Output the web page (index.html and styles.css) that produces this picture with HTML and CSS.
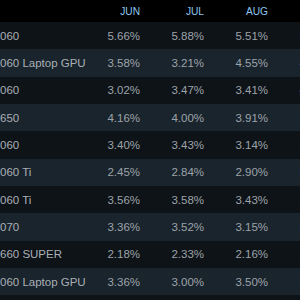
FILE: index.html
```html
<!DOCTYPE html>
<html>
<head>
<meta charset="utf-8">
<link rel="stylesheet" href="styles.css">
</head>
<body>
<div class="table">
  <div class="row head">
    <div class="name"></div>
    <div class="val">JUN</div>
    <div class="val">JUL</div>
    <div class="val">AUG</div>
    <div class="val">SEP</div>
  </div>
  <div class="row">
    <div class="name">060</div>
    <div class="val">5.66%</div><div class="val">5.88%</div><div class="val">5.51%</div><div class="val">5.09%</div>
  </div>
  <div class="row alt">
    <div class="name">060 Laptop GPU</div>
    <div class="val">3.58%</div><div class="val">3.21%</div><div class="val">4.55%</div><div class="val">4.01%</div>
  </div>
  <div class="row">
    <div class="name">060</div>
    <div class="val">3.02%</div><div class="val">3.47%</div><div class="val">3.41%</div><div class="val">4.12%</div>
  </div>
  <div class="row alt">
    <div class="name">650</div>
    <div class="val">4.16%</div><div class="val">4.00%</div><div class="val">3.91%</div><div class="val">3.84%</div>
  </div>
  <div class="row">
    <div class="name">060</div>
    <div class="val">3.40%</div><div class="val">3.43%</div><div class="val">3.14%</div><div class="val">3.18%</div>
  </div>
  <div class="row alt">
    <div class="name">060 Ti</div>
    <div class="val">2.45%</div><div class="val">2.84%</div><div class="val">2.90%</div><div class="val">3.09%</div>
  </div>
  <div class="row">
    <div class="name">060 Ti</div>
    <div class="val">3.56%</div><div class="val">3.58%</div><div class="val">3.43%</div><div class="val">3.38%</div>
  </div>
  <div class="row alt">
    <div class="name">070</div>
    <div class="val">3.36%</div><div class="val">3.52%</div><div class="val">3.15%</div><div class="val">3.21%</div>
  </div>
  <div class="row">
    <div class="name">660 SUPER</div>
    <div class="val">2.18%</div><div class="val">2.33%</div><div class="val">2.16%</div><div class="val">2.35%</div>
  </div>
  <div class="row alt">
    <div class="name">060 Laptop GPU</div>
    <div class="val">3.36%</div><div class="val">3.00%</div><div class="val">3.50%</div><div class="val">3.46%</div>
  </div>
  <div class="row">
    <div class="name"></div>
    <div class="val"></div><div class="val"></div><div class="val"></div><div class="val"></div>
  </div>
</div>
</body>
</html>
```
FILE: styles.css
```css
html, body {
  margin: 0;
  padding: 0;
  background: #0e1318;
  overflow: hidden;
  width: 300px;
  height: 300px;
}
.table {
  display: flex;
  flex-direction: column;
  width: 352px;
  font-family: "Liberation Sans", Arial, sans-serif;
  font-size: 11.5px;
}
.row {
  display: grid;
  grid-template-columns: 96px repeat(4, 64px);
  height: 27.33px;
  align-items: center;
  background: #0e1318;
  color: #9da3a9;
  white-space: nowrap;
}
.row.alt {
  background: #1a242d;
}
.row.head {
  height: 22px;
  background: #000000;
  color: #8cc6ee;
  font-size: 10.2px;
}
.name {
  padding-left: 0;
  color: #a9afb5;
  overflow: visible;
}
.val {
  text-align: right;
  padding-right: 20px;
}
```
